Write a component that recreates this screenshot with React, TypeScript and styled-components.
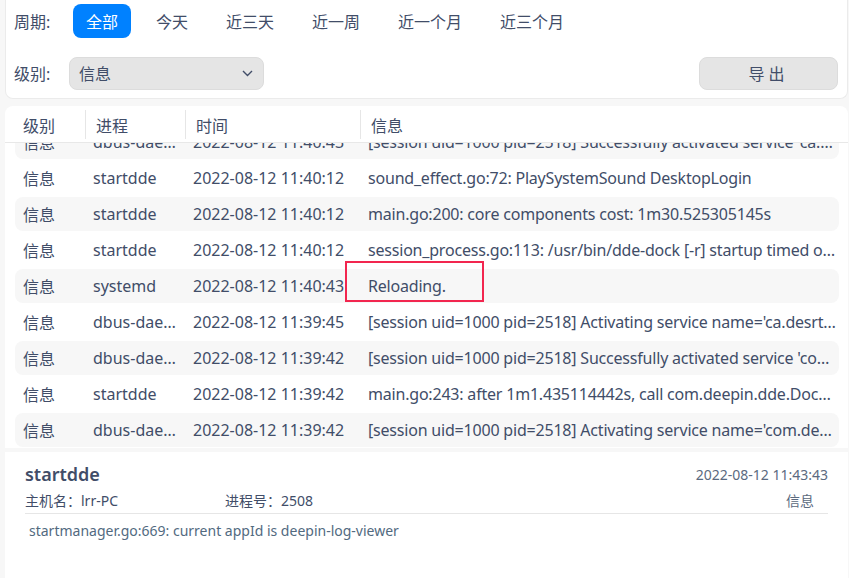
import React, { useLayoutEffect, useRef } from 'react';
import styled, { createGlobalStyle } from 'styled-components';

const GlobalStyle = createGlobalStyle`
  html, body {
    margin: 0;
    padding: 0;
    background: #f7f7f7;
  }
  body {
    font-family: "Noto Sans", "Noto Sans CJK SC", sans-serif;
    color: #414d68;
  }
`;

const StyledApp = styled.div`
  position: relative;
  width: 849px;
  height: 578px;
  overflow: hidden;
  box-sizing: border-box;
  padding: 0 1px 0 5px;
  display: flex;
  flex-direction: column;
`;

const StyledFilterPanel = styled.div`
  background: #fff;
  border: 1px solid #ebebeb;
  border-top: none;
  border-radius: 0 0 8px 8px;
  box-sizing: border-box;
  height: 99px;
  padding: 4px 8px 0 8px;
  display: flex;
  flex-direction: column;
  gap: 18px;
`;

const StyledFilterRow = styled.div`
  display: flex;
  align-items: center;
  height: 34px;
`;

const StyledLabel = styled.span<{ $width: number }>`
  font-size: 16px;
  width: ${(p) => p.$width}px;
  flex: none;
  white-space: nowrap;
`;

const StyledPeriods = styled.div`
  display: flex;
  gap: 12px;
`;

const StyledPeriod = styled.button<{ $active?: boolean }>`
  height: 34px;
  padding: 0 13px;
  border: none;
  border-radius: 8px;
  font-family: inherit;
  font-size: 16px;
  color: ${(p) => (p.$active ? '#fff' : '#414d68')};
  background: ${(p) => (p.$active ? '#0081ff' : 'transparent')};
  cursor: pointer;
`;

const StyledCombo = styled.div`
  width: 195px;
  height: 33px;
  box-sizing: border-box;
  border: 1px solid #dcdcdc;
  border-radius: 8px;
  background: #e5e5e5;
  display: flex;
  align-items: center;
  justify-content: space-between;
  padding: 0 10px 0 9px;
  font-size: 16px;
`;

const StyledSpacer = styled.div`
  flex: 1;
`;

const StyledExport = styled.button`
  width: 139px;
  height: 33px;
  border: 1px solid #dcdcdc;
  border-radius: 8px;
  background: #e5e5e5;
  font-family: inherit;
  font-size: 16px;
  letter-spacing: 4px;
  color: #414d68;
  margin-right: 1px;
`;

const StyledTable = styled.div`
  margin-top: 7px;
  height: 342px;
  background: #fff;
  border-radius: 8px 8px 0 0;
  display: flex;
  flex-direction: column;
`;

const StyledHeader = styled.div`
  display: grid;
  grid-template-columns: 70px 100px 175px 1fr;
  height: 36px;
  flex: none;
  padding: 0 9px 0 10px;
  border-bottom: 1px solid #e8e8e8;
`;

const StyledHeaderCell = styled.div<{ $first?: boolean }>`
  display: flex;
  align-items: center;
  margin: 4px 0 3px;
  padding-left: ${(p) => (p.$first ? 8 : 10)}px;
  border-left: ${(p) => (p.$first ? 'none' : '1px solid #e6e6e6')};
  font-size: 16px;
`;

const StyledBody = styled.div`
  flex: 1;
  overflow: hidden;
  padding: 1px 9px 0 10px;
  display: flex;
  flex-direction: column;
  gap: 2px;
`;

const StyledRow = styled.div<{ $striped: boolean }>`
  display: grid;
  grid-template-columns: 70px 100px 175px 1fr;
  height: 34px;
  flex: none;
  border-radius: 8px;
  background: ${(p) => (p.$striped ? '#f7f7f7' : 'transparent')};
`;

const StyledCell = styled.div<{ $padRight?: number; $tight?: boolean }>`
  display: flex;
  align-items: center;
  min-width: 0;
  padding: 0 ${(p) => p.$padRight ?? 4}px 0 8px;
  font-size: 16px;
  letter-spacing: ${(p) => (p.$tight ? '-0.2px' : 'normal')};
  white-space: nowrap;
`;

const StyledEllipsis = styled.span`
  overflow: hidden;
  text-overflow: ellipsis;
`;

const StyledDetail = styled.div`
  margin-top: 4px;
  flex: 1;
  background: #fff;
  padding: 10px 20px 0 20px;
`;

const StyledDetailTop = styled.div`
  display: flex;
  justify-content: space-between;
  align-items: center;
  height: 24px;
`;

const StyledName = styled.div`
  font-size: 18px;
  font-weight: 600;
  color: #414d68;
`;

const StyledDate = styled.div`
  font-size: 14px;
  color: #5b6a80;
`;

const StyledMeta = styled.div`
  display: flex;
  align-items: center;
  height: 27px;
  font-size: 14px;
  border-bottom: 1px solid #e6e6e6;
`;

const StyledMetaItem = styled.div<{ $width?: number }>`
  width: ${(p) => (p.$width ? `${p.$width}px` : 'auto')};
  color: #414d68;
`;

const StyledMetaLevel = styled.div`
  margin-left: auto;
  margin-right: 14px;
  color: #5b6a80;
`;

const StyledMessage = styled.div`
  padding: 7px 0 0 4px;
  font-size: 14px;
  color: #526a7f;
`;

const StyledMark = styled.div`
  position: absolute;
  left: 345px;
  top: 261px;
  width: 139px;
  height: 41px;
  box-sizing: border-box;
  border: 2px solid #f2264f;
  pointer-events: none;
`;

const Chevron = () => (
  <svg width="11" height="7" viewBox="0 0 11 7" fill="none">
    <path d="M1 1l4.5 4.5L10 1" stroke="#414d68" strokeWidth="1.4" />
  </svg>
);

type LogItem = {
  level: string;
  process: string;
  time: string;
  message: string;
};

const periods = ['全部', '今天', '近三天', '近一周', '近一个月', '近三个月'];

const logs: LogItem[] = [
  {
    level: '信息',
    process: 'dbus-daemon',
    time: '2022-08-12 11:40:43',
    message: "[session uid=1000 pid=2518] Successfully activated service 'ca.desrt.dconf'",
  },
  {
    level: '信息',
    process: 'startdde',
    time: '2022-08-12 11:40:12',
    message: 'sound_effect.go:72: PlaySystemSound DesktopLogin',
  },
  {
    level: '信息',
    process: 'startdde',
    time: '2022-08-12 11:40:12',
    message: 'main.go:200: core components cost: 1m30.525305145s',
  },
  {
    level: '信息',
    process: 'startdde',
    time: '2022-08-12 11:40:12',
    message: 'session_process.go:113: /usr/bin/dde-dock [-r] startup timed out!',
  },
  {
    level: '信息',
    process: 'systemd',
    time: '2022-08-12 11:40:43',
    message: 'Reloading.',
  },
  {
    level: '信息',
    process: 'dbus-daemon',
    time: '2022-08-12 11:39:45',
    message: "[session uid=1000 pid=2518] Activating service name='ca.desrt.dconf' requested by ':1.30'",
  },
  {
    level: '信息',
    process: 'dbus-daemon',
    time: '2022-08-12 11:39:42',
    message: "[session uid=1000 pid=2518] Successfully activated service 'com.deepin.daemon.Audio'",
  },
  {
    level: '信息',
    process: 'startdde',
    time: '2022-08-12 11:39:42',
    message: 'main.go:243: after 1m1.435114442s, call com.deepin.dde.Dock.Show',
  },
  {
    level: '信息',
    process: 'dbus-daemon',
    time: '2022-08-12 11:39:42',
    message: "[session uid=1000 pid=2518] Activating service name='com.deepin.daemon.Audio'",
  },
  {
    level: '信息',
    process: 'startdde',
    time: '2022-08-12 11:39:41',
    message: 'main.go:231: launch dde-dock',
  },
  {
    level: '信息',
    process: 'startdde',
    time: '2022-08-12 11:39:41',
    message: 'main.go:220: launch dde-desktop',
  },
];

export default function App() {
  const bodyRef = useRef<HTMLDivElement>(null);

  useLayoutEffect(() => {
    if (bodyRef.current) bodyRef.current.scrollTop = 19;
  }, []);

  return (
    <StyledApp>
      <GlobalStyle />
      <StyledFilterPanel>
        <StyledFilterRow>
          <StyledLabel $width={59}>周期:</StyledLabel>
          <StyledPeriods>
            {periods.map((p, i) => (
              <StyledPeriod key={p} $active={i === 0}>
                {p}
              </StyledPeriod>
            ))}
          </StyledPeriods>
        </StyledFilterRow>
        <StyledFilterRow>
          <StyledLabel $width={55}>级别:</StyledLabel>
          <StyledCombo>
            <span>信息</span>
            <Chevron />
          </StyledCombo>
          <StyledSpacer />
          <StyledExport>导出</StyledExport>
        </StyledFilterRow>
      </StyledFilterPanel>

      <StyledTable>
        <StyledHeader>
          <StyledHeaderCell $first>级别</StyledHeaderCell>
          <StyledHeaderCell>进程</StyledHeaderCell>
          <StyledHeaderCell>时间</StyledHeaderCell>
          <StyledHeaderCell>信息</StyledHeaderCell>
        </StyledHeader>
        <StyledBody ref={bodyRef}>
          {logs.map((item, i) => (
            <StyledRow key={`row-${i}`} $striped={i % 2 === 0}>
              <StyledCell>{item.level}</StyledCell>
              <StyledCell $padRight={6}>
                <StyledEllipsis>{item.process}</StyledEllipsis>
              </StyledCell>
              <StyledCell>{item.time}</StyledCell>
              <StyledCell $padRight={2} $tight>
                <StyledEllipsis>{item.message}</StyledEllipsis>
              </StyledCell>
            </StyledRow>
          ))}
        </StyledBody>
      </StyledTable>

      <StyledDetail>
        <StyledDetailTop>
          <StyledName>startdde</StyledName>
          <StyledDate>2022-08-12 11:43:43</StyledDate>
        </StyledDetailTop>
        <StyledMeta>
          <StyledMetaItem $width={200}>主机名：lrr-PC</StyledMetaItem>
          <StyledMetaItem>进程号：2508</StyledMetaItem>
          <StyledMetaLevel>信息</StyledMetaLevel>
        </StyledMeta>
        <StyledMessage>startmanager.go:669: current appId is deepin-log-viewer</StyledMessage>
      </StyledDetail>

      <StyledMark />
    </StyledApp>
  );
}
